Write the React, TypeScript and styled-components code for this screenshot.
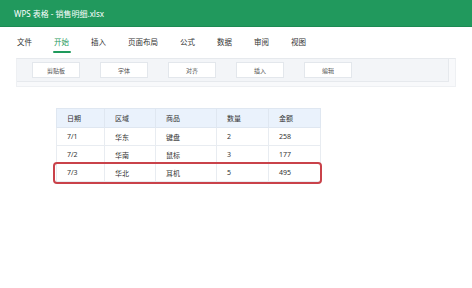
import React from "react";
import styled, { createGlobalStyle } from "styled-components";

const Global = createGlobalStyle`
  html, body { margin: 0; padding: 0; background: #ffffff; }
  body { font-family: "Noto Sans", "Noto Sans CJK SC", sans-serif; color: #333; }
  * { box-sizing: border-box; }
`;

const Page = styled.div`
  width: 472px;
  height: 288px;
  display: flex;
  flex-direction: column;
  background: #fff;
  overflow: hidden;
`;

const TitleBar = styled.div`
  height: 27px;
  background: #21995d;
  border-bottom: 1px solid #1c8a53;
  display: flex;
  align-items: center;
  padding-left: 14px;
  color: #fff;
  font-size: 8px;
  letter-spacing: 0;
`;

const Tabs = styled.div`
  height: 31px;
  display: flex;
  align-items: flex-start;
  gap: 22px;
  padding: 10px 0 0 17px;
`;

const Tab = styled.div<{ $active?: boolean }>`
  display: flex;
  flex-direction: column;
  font-size: 7.5px;
  line-height: 10px;
  color: ${(p) => (p.$active ? "#1f9a5c" : "#333")};
  &::after {
    content: "";
    display: block;
    height: 2px;
    margin: 4px -2px 0 -1px;
    border-radius: 1px;
    background: ${(p) => (p.$active ? "#1f9a5c" : "transparent")};
  }
`;

const PanelOuter = styled.div`
  margin: 0 16px;
  height: 29px;
  background: #f8f9fb;
  border-top: 1px solid #e6e9ed;
  border-bottom: 1px solid #eef0f3;
  border-left: 1px solid #eef0f3;
  border-right: 1px solid #eef0f3;
  padding: 0 6px 4px 0;
  display: flex;
`;

const Toolbar = styled.div`
  flex: 1;
  display: flex;
  align-items: center;
  gap: 20px;
  padding: 0 0 0 15px;
  background: #f3f5f8;
  border-right: 1px solid #e6e9ed;
  border-bottom: 1px solid #e6e9ed;
`;

const ToolButton = styled.div`
  width: 48px;
  height: 16px;
  background: #fff;
  border: 1px solid #e3e7ec;
  display: flex;
  align-items: center;
  justify-content: center;
  font-size: 6px;
  color: #555;
`;

const Content = styled.div`
  padding: 21px 0 0 56px;
`;

const TableWrap = styled.div`
  position: relative;
  width: 264px;
`;

const Table = styled.table`
  border-collapse: collapse;
  table-layout: fixed;
  width: 264px;
  font-size: 7px;
  color: #333;
`;

const Th = styled.th<{ $w: number }>`
  width: ${(p) => p.$w}px;
  height: 19px;
  padding: 0 0 0 10px;
  text-align: left;
  font-weight: normal;
  background: #eaf2fc;
  border: 1px solid #dfe7f1;
`;

const Td = styled.td`
  height: 18px;
  padding: 0 0 0 10px;
  border: 1px solid #e8ecf1;
`;

const Highlight = styled.div`
  position: absolute;
  left: -3px;
  top: 54px;
  width: 269px;
  height: 22px;
  border: 2px solid #c9424a;
  border-radius: 4px;
  pointer-events: none;
`;

const tabs = ["文件", "开始", "插入", "页面布局", "公式", "数据", "审阅", "视图"];
const tools = ["剪贴板", "字体", "对齐", "插入", "编辑"];
const cols: [string, number][] = [
  ["日期", 48],
  ["区域", 51],
  ["商品", 61],
  ["数量", 52],
  ["金额", 52],
];
const rows = [
  ["7/1", "华东", "键盘", "2", "258"],
  ["7/2", "华南", "鼠标", "3", "177"],
  ["7/3", "华北", "耳机", "5", "495"],
];

export default function App() {
  return (
    <Page>
      <Global />
      <TitleBar>WPS 表格 - 销售明细.xlsx</TitleBar>
      <Tabs>
        {tabs.map((t) => (
          <Tab key={t} $active={t === "开始"}>
            {t}
          </Tab>
        ))}
      </Tabs>
      <PanelOuter>
        <Toolbar>
          {tools.map((t) => (
            <ToolButton key={t}>{t}</ToolButton>
          ))}
        </Toolbar>
      </PanelOuter>
      <Content>
        <TableWrap>
          <Table>
            <thead>
              <tr>
                {cols.map(([c, w]) => (
                  <Th key={c} $w={w}>
                    {c}
                  </Th>
                ))}
              </tr>
            </thead>
            <tbody>
              {rows.map((r) => (
                <tr key={r[0]}>
                  {r.map((c, i) => (
                    <Td key={i}>{c}</Td>
                  ))}
                </tr>
              ))}
            </tbody>
          </Table>
          <Highlight />
        </TableWrap>
      </Content>
    </Page>
  );
}
